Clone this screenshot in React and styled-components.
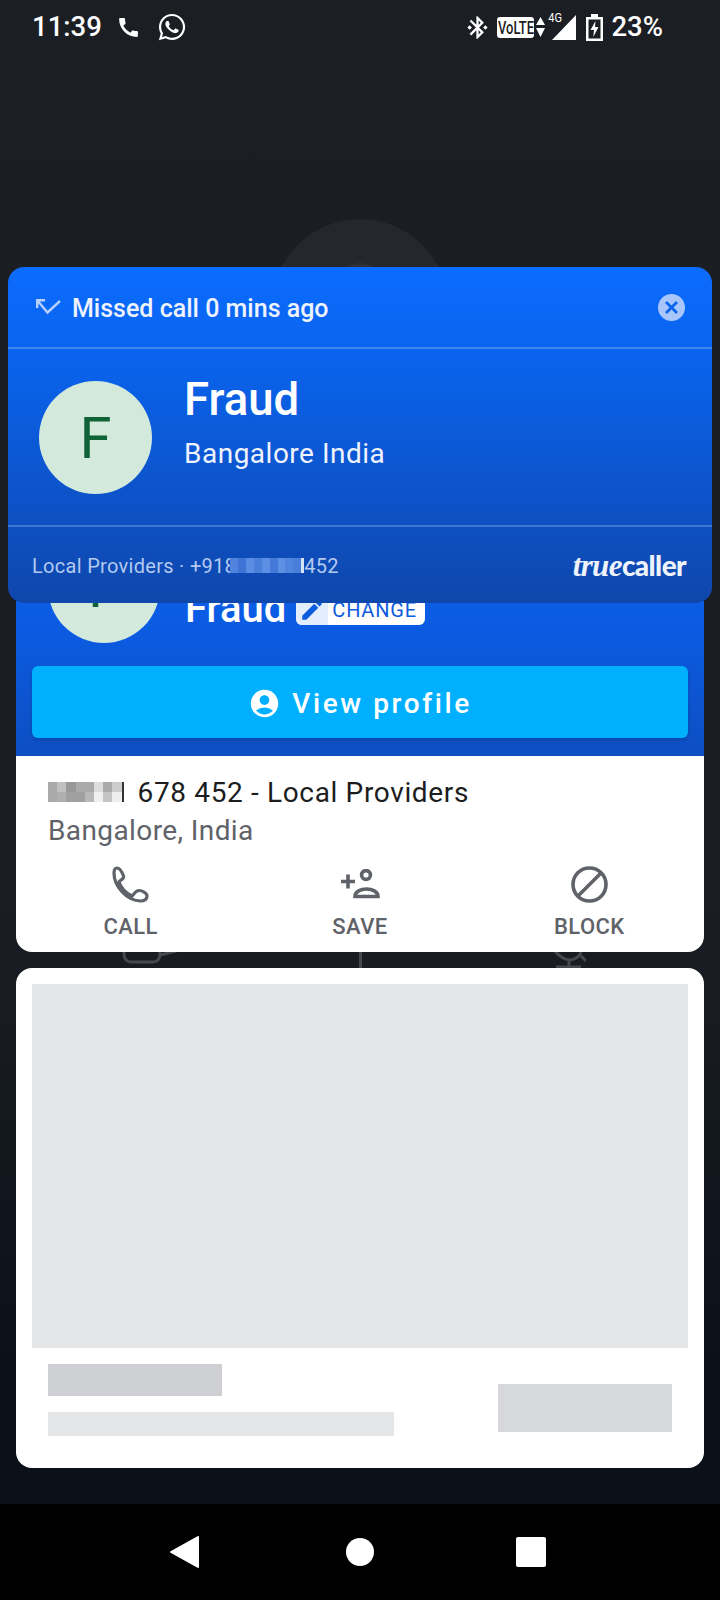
import React from "react";
import styled, { createGlobalStyle } from "styled-components";
import { FaWhatsapp } from "react-icons/fa";
import { MdAccountCircle, MdBluetoothConnected, MdCall, MdEdit } from "react-icons/md";

const GlobalStyle = createGlobalStyle`
  html, body {
    margin: 0;
    padding: 0;
    background: #000;
    font-family: Roboto, "Liberation Sans", sans-serif;
  }
`;

const Screen = styled.div`
  position: relative;
  width: 720px;
  height: 1600px;
  overflow: hidden;
  display: flex;
  flex-direction: column;
  background: linear-gradient(#1b1e23 0%, #191c22 62%, #0a1119 85%);
`;

const StatusBar = styled.div`
  height: 48px;
  padding: 6px 57px 0 32px;
  box-sizing: border-box;
  display: flex;
  align-items: center;
  color: #fff;
`;

const StatusGroup = styled.div`
  display: flex;
  align-items: center;
  margin-left: ${(p) => (p.$push ? "auto" : "0")};
`;

const StatusText = styled.span`
  font-size: 27.5px;
  font-weight: 500;
  line-height: 30px;
  margin-left: ${(p) => p.$gap || 0}px;
`;

const StatusIcon = styled.span`
  display: flex;
  margin-left: ${(p) => p.$gap || 0}px;
`;

const VolteBadge = styled.span`
  width: 37px;
  height: 21px;
  margin-left: 6px;
  border-radius: 3px;
  background: #fff;
  color: #1b1e23;
  display: flex;
  justify-content: center;
  overflow: hidden;
`;

const VolteText = styled.span`
  font-size: 18px;
  font-weight: 500;
  line-height: 21px;
  transform: scaleX(0.72);
  white-space: nowrap;
`;

const SignalWrap = styled.span`
  position: relative;
  display: flex;
  margin-left: 7px;
`;

const FourG = styled.span`
  position: absolute;
  top: -4px;
  left: -5px;
  font-size: 13px;
  line-height: 14px;
  transform: scaleX(0.85);
  color: #fff;
`;

const Backdrop = styled.div`
  height: 452px;
  padding-top: 171px;
  box-sizing: border-box;
  display: flex;
  justify-content: center;
`;

const BackdropCircle = styled.div`
  width: 176px;
  height: 176px;
  border-radius: 50%;
  background: #25272c;
  display: flex;
  justify-content: center;
  padding-top: 44px;
  box-sizing: border-box;
`;

const BackdropHead = styled.div`
  width: 44px;
  height: 44px;
  border-radius: 50%;
  background: #2f3136;
`;

const Column = styled.div`
  margin: 0 16px;
`;

const BluePanel = styled.div`
  height: 256px;
  padding: 31px 16px 0;
  box-sizing: border-box;
  background: linear-gradient(#0b66f2 0%, #0b5be2 50%, #0e4fc2 100%);
`;

const ProfileRow = styled.div`
  height: 135px;
  padding-left: 16px;
  display: flex;
  gap: 25px;
`;

const Avatar = styled.div`
  flex: none;
  width: ${(p) => p.$size}px;
  height: ${(p) => p.$size}px;
  border-radius: 50%;
  background: #d2e9dc;
  color: #0f6336;
  font-size: 58px;
  display: flex;
  align-items: center;
  justify-content: center;
`;

const NameRow = styled.div`
  padding-top: 54px;
  height: 48px;
  display: flex;
  align-items: center;
  gap: 10px;
`;

const BackName = styled.div`
  font-size: 40px;
  font-weight: 500;
  line-height: 48px;
  color: #fff;
`;

const ChangeChip = styled.div`
  height: 30px;
  margin-top: 2px;
  border-radius: 6px;
  background: #fff;
  color: #0d5ce0;
  font-size: 20px;
  line-height: 30px;
  display: flex;
  overflow: hidden;
`;

const ChipIcon = styled.span`
  width: 32px;
  background: #e3eefc;
  display: flex;
  align-items: center;
  justify-content: center;
`;

const ChipLabel = styled.span`
  padding: 0 8px 0 4px;
  letter-spacing: 0.8px;
`;

const ProfileButton = styled.div`
  height: 72px;
  padding-top: 3px;
  box-sizing: border-box;
  border-radius: 6px;
  background: #00b0ff;
  box-shadow: 0 2px 4px rgba(0, 0, 0, 0.15);
  color: #fff;
  font-size: 28px;
  font-weight: 500;
  letter-spacing: 2.6px;
  display: flex;
  align-items: center;
  justify-content: center;
  gap: 11px;
`;

const InfoPanel = styled.div`
  height: 196px;
  padding-top: 19px;
  box-sizing: border-box;
  background: #fff;
  border-radius: 0 0 16px 16px;
`;

const NumberLine = styled.div`
  padding-left: 32px;
  height: 34px;
  display: flex;
  align-items: center;
  color: #1c1d20;
  font-size: 28px;
  letter-spacing: 0.65px;
`;

const Mosaic = styled.span`
  display: inline-grid;
  grid-template-columns: repeat(${(p) => p.$cols}, ${(p) => p.$cell}px) ${(p) => p.$tail}px;
  grid-auto-rows: ${(p) => p.$rowHeight}px;
  margin: ${(p) => p.$margin};
`;

const Pixel = styled.span`
  background: ${(p) => p.$tone};
`;

const PlaceLine = styled.div`
  padding-left: 32px;
  margin-top: 5px;
  height: 34px;
  line-height: 34px;
  color: #5f6268;
  font-size: 28px;
  letter-spacing: 0.4px;
`;

const Actions = styled.div`
  margin-top: 18px;
  display: grid;
  grid-template-columns: repeat(3, 1fr);
`;

const Action = styled.div`
  display: flex;
  flex-direction: column;
  align-items: center;
  color: #5f6268;
`;

const ActionIcon = styled.div`
  height: 36px;
  display: flex;
  align-items: center;
`;

const ActionLabel = styled.div`
  margin-top: 11px;
  font-size: 22px;
  font-weight: 500;
  letter-spacing: 0.4px;
  line-height: 28px;
`;

const GapRow = styled.div`
  height: 16px;
  padding: 0 45px;
  overflow: hidden;
  display: grid;
  grid-template-columns: repeat(3, 1fr);
  justify-items: center;
`;

const AdCard = styled.div`
  height: 500px;
  padding: 16px;
  box-sizing: border-box;
  border-radius: 16px;
  background: #fff;
`;

const AdImage = styled.div`
  height: 364px;
  background: #e5e6e8;
`;

const AdFooter = styled.div`
  padding: 16px 16px 0;
  display: flex;
  justify-content: space-between;
`;

const AdLines = styled.div`
  display: flex;
  flex-direction: column;
  gap: 16px;
`;

const Skeleton = styled.div`
  width: ${(p) => p.$w}px;
  height: ${(p) => p.$h}px;
  margin-top: ${(p) => p.$top || 0}px;
  background: ${(p) => p.$tone};
`;

const NavBar = styled.div`
  margin-top: auto;
  height: 96px;
  padding-left: 170px;
  background: #000;
  display: flex;
  align-items: center;
`;

const NavCircle = styled.div`
  width: 28px;
  height: 28px;
  margin-left: 147px;
  border-radius: 50%;
  background: #fff;
`;

const NavSquare = styled.div`
  width: 30px;
  height: 30px;
  margin-left: 142px;
  border-radius: 2px;
  background: #fff;
`;

// floats over the call card, like the real caller id popup
const Popup = styled.div`
  position: absolute;
  top: 267px;
  left: 8px;
  right: 8px;
  height: 336px;
  border-radius: 16px;
  overflow: hidden;
  color: #fff;
  background: linear-gradient(#0b6cff 0%, #0a62ea 30%, #0d52c8 70%, #0f47ab 100%);
`;

const PopupHeader = styled.div`
  height: 80px;
  padding: 0 27px 0 28px;
  display: flex;
  align-items: center;
  border-bottom: 2px solid rgba(255, 255, 255, 0.22);
`;

const PopupTitle = styled.span`
  margin-left: 11px;
  margin-top: 3px;
  font-size: 25px;
  font-weight: 500;
  color: #eef3fe;
`;

const CloseButton = styled.span`
  width: 27px;
  height: 27px;
  margin-left: auto;
  border-radius: 50%;
  background: #a8c6fb;
  color: #0b64ee;
  display: flex;
  align-items: center;
  justify-content: center;
`;

const PopupBody = styled.div`
  height: 178px;
  padding: 32px 0 0 31px;
  box-sizing: border-box;
  display: flex;
  gap: 32px;
  border-bottom: 2px solid rgba(255, 255, 255, 0.22);
`;

const PopupName = styled.div`
  font-size: 45.5px;
  font-weight: 500;
  line-height: 38px;
`;

const PopupPlace = styled.div`
  margin-top: 19px;
  font-size: 28px;
  line-height: 32px;
  letter-spacing: 0.5px;
  color: #eef3fe;
`;

const PopupFooter = styled.div`
  height: 74px;
  padding: 3px 26px 0 24px;
  box-sizing: border-box;
  display: flex;
  align-items: center;
  justify-content: space-between;
`;

const CallerLine = styled.span`
  display: flex;
  align-items: center;
  font-size: 20px;
  letter-spacing: 0.3px;
  color: #b3c9f0;
`;

const Logo = styled.span`
  font-family: Lato, sans-serif;
  font-size: 28px;
  font-weight: 900;
  letter-spacing: -0.6px;
  color: #eef3fb;
`;

const LogoAccent = styled.span`
  font-family: "Liberation Serif", serif;
  font-style: italic;
  font-weight: 700;
  font-size: 31px;
`;

const localTones = [
  "#aaa", "#c0c0c0", "#989898", "#aaa", "#aaa", "#ddd", "#aaa", "#ccc", "#333",
  "#aaa", "#b0b0b0", "#a0a0a0", "#a0a0a0", "#b8b8b8", "#f0f0f0", "#c4c4c4", "#eee", "#333",
];

const popupTones = [
  "#4f83de", "#3f74d6", "#5a8ce2", "#4a7fdc", "#5c8ee3", "#4479d9", "#5d8fe3", "#5084de", "#4a7edb", "#d5e2f8",
];

function MissedIcon() {
  return (
    <svg width="25" height="16" viewBox="0 0 25 16" fill="none" stroke="#b5d0fc" strokeWidth="2.4">
      <path d="M1.2 9V1.2H9M1.2 1.2L11.5 13.5L24 2" />
    </svg>
  );
}

function CloseIcon() {
  return (
    <svg width="13" height="13" viewBox="0 0 13 13" fill="none" stroke="currentColor" strokeWidth="2.8">
      <path d="M1 1L12 12M12 1L1 12" />
    </svg>
  );
}

function PhoneOutline() {
  return (
    <svg width="37" height="37" viewBox="0 0 37 37" fill="none" stroke="currentColor" strokeWidth="3.2" strokeLinejoin="round">
      <path d="M5 2C8 2 10 6 11.5 10C12.5 13 8 14 7 16C9 22 14 27 20 30C22 29 23 24.5 27 24.5C30 24.5 35 27 35 30C35 33 33 35 28 35C14 34 2 20 2 7C2 4 3 2 5 2Z" />
    </svg>
  );
}

function SaveContact() {
  return (
    <svg width="40" height="30" viewBox="0 0 40 30" fill="none" stroke="currentColor" strokeWidth="3.6">
      <circle cx="26" cy="6" r="4.4" />
      <path d="M15 27.5C15 22.5 21 20 26.5 20C32 20 38 22.5 38 27.5Z" />
      <path d="M1 12.5H15M8 5.5V19.5" />
    </svg>
  );
}

function BlockIcon() {
  return (
    <svg width="37" height="37" viewBox="0 0 37 37" fill="none" stroke="currentColor" strokeWidth="3.6">
      <circle cx="18.5" cy="18.5" r="16.5" />
      <path d="M7 30L30 7" />
    </svg>
  );
}

export default function App() {
  return (
    <Screen>
      <GlobalStyle />
      <StatusBar>
        <StatusGroup>
          <StatusText>11:39</StatusText>
          <StatusIcon $gap={14}>
            <MdCall size={25} />
          </StatusIcon>
          <StatusIcon $gap={16}>
            <FaWhatsapp size={30} />
          </StatusIcon>
        </StatusGroup>
        <StatusGroup $push>
          <StatusIcon>
            <MdBluetoothConnected size={27} />
          </StatusIcon>
          <VolteBadge>
            <VolteText>VoLTE</VolteText>
          </VolteBadge>
          <StatusIcon $gap={2}>
            <svg width="9" height="20" viewBox="0 0 9 20" fill="#fff">
              <path d="M4.5 0L9 8H0ZM0 11H9L4.5 20Z" />
            </svg>
          </StatusIcon>
          <SignalWrap>
            <FourG>4G</FourG>
            <svg width="24" height="25" viewBox="0 0 24 25" fill="#fff">
              <path d="M24 0V25H0Z" />
            </svg>
          </SignalWrap>
          <StatusIcon $gap={10}>
            <svg width="17" height="27" viewBox="0 0 17 27">
              <path d="M5 0H12V3H17V27H0V3H5Z" fill="#fff" />
              <rect x="2.5" y="5.5" width="12" height="19" fill="#1b1e23" />
              <path d="M9.5 7L4.5 16H8L7.3 23L12.5 13H9Z" fill="#fff" />
            </svg>
          </StatusIcon>
          <StatusText $gap={8}>23%</StatusText>
        </StatusGroup>
      </StatusBar>

      <Backdrop>
        <BackdropCircle>
          <BackdropHead />
        </BackdropCircle>
      </Backdrop>

      <Column>
        <BluePanel>
          <ProfileRow>
            <Avatar $size={112}>F</Avatar>
            <NameRow>
              <BackName>Fraud</BackName>
              <ChangeChip>
                <ChipIcon>
                  <MdEdit size={26} />
                </ChipIcon>
                <ChipLabel>CHANGE</ChipLabel>
              </ChangeChip>
            </NameRow>
          </ProfileRow>
          <ProfileButton>
            <MdAccountCircle size={33} />
            View profile
          </ProfileButton>
        </BluePanel>

        <InfoPanel>
          <NumberLine>
            <Mosaic $cols={8} $cell={9.2} $tail={2} $rowHeight={10} $margin="0 14px 0 0">
              {localTones.map((tone, i) => (
                <Pixel key={i} $tone={tone} />
              ))}
            </Mosaic>
            678 452 - Local Providers
          </NumberLine>
          <PlaceLine>Bangalore, India</PlaceLine>
          <Actions>
            <Action>
              <ActionIcon>
                <PhoneOutline />
              </ActionIcon>
              <ActionLabel>CALL</ActionLabel>
            </Action>
            <Action>
              <ActionIcon>
                <SaveContact />
              </ActionIcon>
              <ActionLabel>SAVE</ActionLabel>
            </Action>
            <Action>
              <ActionIcon>
                <BlockIcon />
              </ActionIcon>
              <ActionLabel>BLOCK</ActionLabel>
            </Action>
          </Actions>
        </InfoPanel>
      </Column>

      <GapRow>
        <svg width="56" height="16" viewBox="0 0 56 16" fill="none" stroke="#47494e" strokeWidth="3">
          <path d="M2 -8V3C2 7 5 10 9 10H31C35 10 38 7 38 3V-8M38 3L54 -1" />
        </svg>
        <svg width="3" height="16" viewBox="0 0 3 16" fill="#47494e">
          <rect width="3" height="16" />
        </svg>
        <svg width="32" height="16" viewBox="0 0 32 16" fill="none" stroke="#47494e" strokeWidth="3">
          <path d="M1 -1C6 5 12 8 15 8C19 8 25 6 27 0M27 4L32 9M15 8V16M2 15H27" />
        </svg>
      </GapRow>

      <Column>
        <AdCard>
          <AdImage />
          <AdFooter>
            <AdLines>
              <Skeleton $w={174} $h={32} $tone="#cdcfd3" />
              <Skeleton $w={346} $h={24} $tone="#e5e6e8" />
            </AdLines>
            <Skeleton $w={174} $h={48} $top={20} $tone="#d7d8db" />
          </AdFooter>
        </AdCard>
      </Column>

      <NavBar>
        <svg width="29" height="32" viewBox="0 0 29 32" fill="#fff" stroke="#fff" strokeWidth="2" strokeLinejoin="round">
          <path d="M28 1V31L1 16Z" />
        </svg>
        <NavCircle />
        <NavSquare />
      </NavBar>

      <Popup>
        <PopupHeader>
          <MissedIcon />
          <PopupTitle>Missed call 0 mins ago</PopupTitle>
          <CloseButton>
            <CloseIcon />
          </CloseButton>
        </PopupHeader>
        <PopupBody>
          <Avatar $size={113}>F</Avatar>
          <div>
            <PopupName>Fraud</PopupName>
            <PopupPlace>Bangalore India</PopupPlace>
          </div>
        </PopupBody>
        <PopupFooter>
          <CallerLine>
            Local Providers · +918
            <Mosaic $cols={9} $cell={7.9} $tail={3} $rowHeight={15} $margin="0 0 0 -6px">
              {popupTones.map((tone, i) => (
                <Pixel key={i} $tone={tone} />
              ))}
            </Mosaic>
            452
          </CallerLine>
          <Logo>
            <LogoAccent>true</LogoAccent>caller
          </Logo>
        </PopupFooter>
      </Popup>
    </Screen>
  );
}
